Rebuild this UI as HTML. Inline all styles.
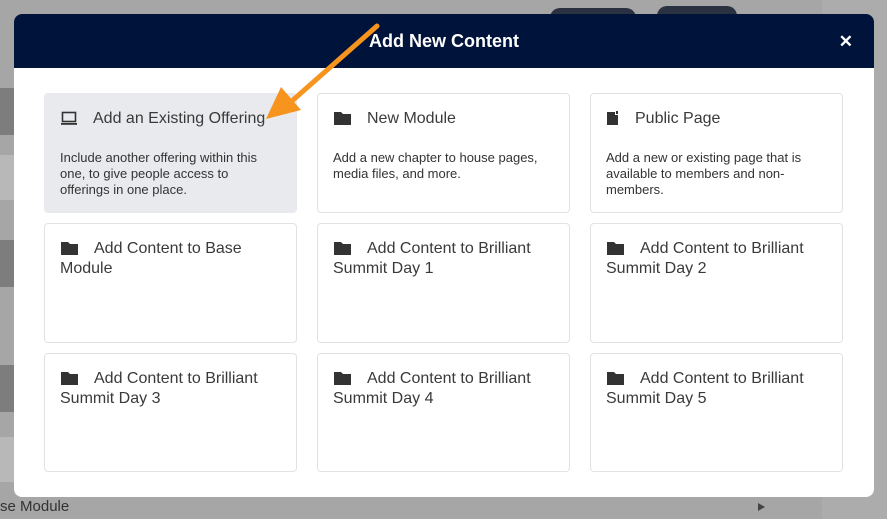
<!DOCTYPE html>
<html><head><style>
*{margin:0;padding:0;box-sizing:border-box}
body{width:887px;height:519px;overflow:hidden;background:#a6a6a6;font-family:"Liberation Sans",Arial,sans-serif;position:relative}
.abs{position:absolute}
.modal{position:absolute;left:14px;top:14px;width:860px;height:483px;background:#fff;border-radius:8px;overflow:hidden}
.hdr{height:54px;background:#00133a;color:#fff;font-weight:bold;font-size:18px;text-align:center;line-height:54px}
.x{position:absolute;right:21px;top:1px;line-height:54px;font-size:17px;color:#fff;font-weight:bold}
.card{position:absolute;width:253px;border:1px solid #e2e2e2;border-radius:4px;padding:15px 15px;color:#333}
.t{font-size:16px;line-height:20px;color:#3a3a3a}
.t svg{display:inline-block;vertical-align:-2px;margin-right:16px;margin-left:1px}
.d{font-size:13px;line-height:16px;margin-top:21px;color:#333}
</style></head><body>
<div class="abs" style="left:0;top:88px;width:14px;height:47px;background:#7d7d7d"></div>
<div class="abs" style="left:0;top:155px;width:14px;height:45px;background:#b8b8b8"></div>
<div class="abs" style="left:0;top:240px;width:14px;height:47px;background:#7d7d7d"></div>
<div class="abs" style="left:0;top:365px;width:14px;height:47px;background:#7d7d7d"></div>
<div class="abs" style="left:0;top:437px;width:14px;height:45px;background:#b8b8b8"></div>
<div class="abs" style="left:822px;top:0;width:65px;height:519px;background:#acacac"></div>
<div class="abs" style="left:550px;top:8px;width:86px;height:20px;background:#2a3140;border-radius:10px"></div>
<div class="abs" style="left:657px;top:6px;width:80px;height:20px;background:#2a3140;border-radius:10px"></div>
<div class="abs" style="left:0;top:498px;font-size:15px;color:#333">se Module</div>
<div class="abs" style="left:758px;top:503px;width:0;height:0;border-left:7px solid #444;border-top:4px solid transparent;border-bottom:4px solid transparent"></div>
<div class="modal">
<div class="hdr">Add New Content</div><div class="x">✕</div>
<div class="card" style="left:30px;top:79px;height:120px;background:#e9eaed;border-color:#e9eaed">
<div class="t"><svg width="16" height="14"><rect x="1.5" y="1.5" width="13" height="9" fill="none" stroke="#333" stroke-width="1.6"/><rect x="0" y="12" width="16" height="1.8" fill="#333"/></svg>Add an Existing Offering</div>
<div class="d">Include another offering within this one, to give people access to offerings in one place.</div></div>
<div class="card" style="left:303px;top:79px;height:120px">
<div class="t"><svg width="17" height="13"><path d="M0 0h7l2 2h8v11H0z" fill="#333"/></svg>New Module</div>
<div class="d">Add a new chapter to house pages, media files, and more.</div></div>
<div class="card" style="left:576px;top:79px;height:120px">
<div class="t"><svg width="12" height="14"><path d="M0 1h8v3h3v10H0z" fill="#333"/><path d="M9 0h2v3H9z" fill="#333"/></svg>Public Page</div>
<div class="d">Add a new or existing page that is available to members and non-members.</div></div>
<div class="card" style="left:30px;top:209px;height:120px"><div class="t"><svg width="17" height="13"><path d="M0 0h7l2 2h8v11H0z" fill="#333"/></svg>Add Content to Base Module</div></div>
<div class="card" style="left:303px;top:209px;height:120px"><div class="t"><svg width="17" height="13"><path d="M0 0h7l2 2h8v11H0z" fill="#333"/></svg>Add Content to Brilliant Summit Day 1</div></div>
<div class="card" style="left:576px;top:209px;height:120px"><div class="t"><svg width="17" height="13"><path d="M0 0h7l2 2h8v11H0z" fill="#333"/></svg>Add Content to Brilliant Summit Day 2</div></div>
<div class="card" style="left:30px;top:339px;height:119px"><div class="t"><svg width="17" height="13"><path d="M0 0h7l2 2h8v11H0z" fill="#333"/></svg>Add Content to Brilliant Summit Day 3</div></div>
<div class="card" style="left:303px;top:339px;height:119px"><div class="t"><svg width="17" height="13"><path d="M0 0h7l2 2h8v11H0z" fill="#333"/></svg>Add Content to Brilliant Summit Day 4</div></div>
<div class="card" style="left:576px;top:339px;height:119px"><div class="t"><svg width="17" height="13"><path d="M0 0h7l2 2h8v11H0z" fill="#333"/></svg>Add Content to Brilliant Summit Day 5</div></div>
</div>
<svg class="abs" style="left:0;top:0" width="887" height="519"><line x1="377" y1="26" x2="293" y2="100" stroke="#f7941d" stroke-width="5" stroke-linecap="round"/><path d="M266 119 L281 87 L301 110 Z" fill="#f7941d"/></svg>
</body></html>
